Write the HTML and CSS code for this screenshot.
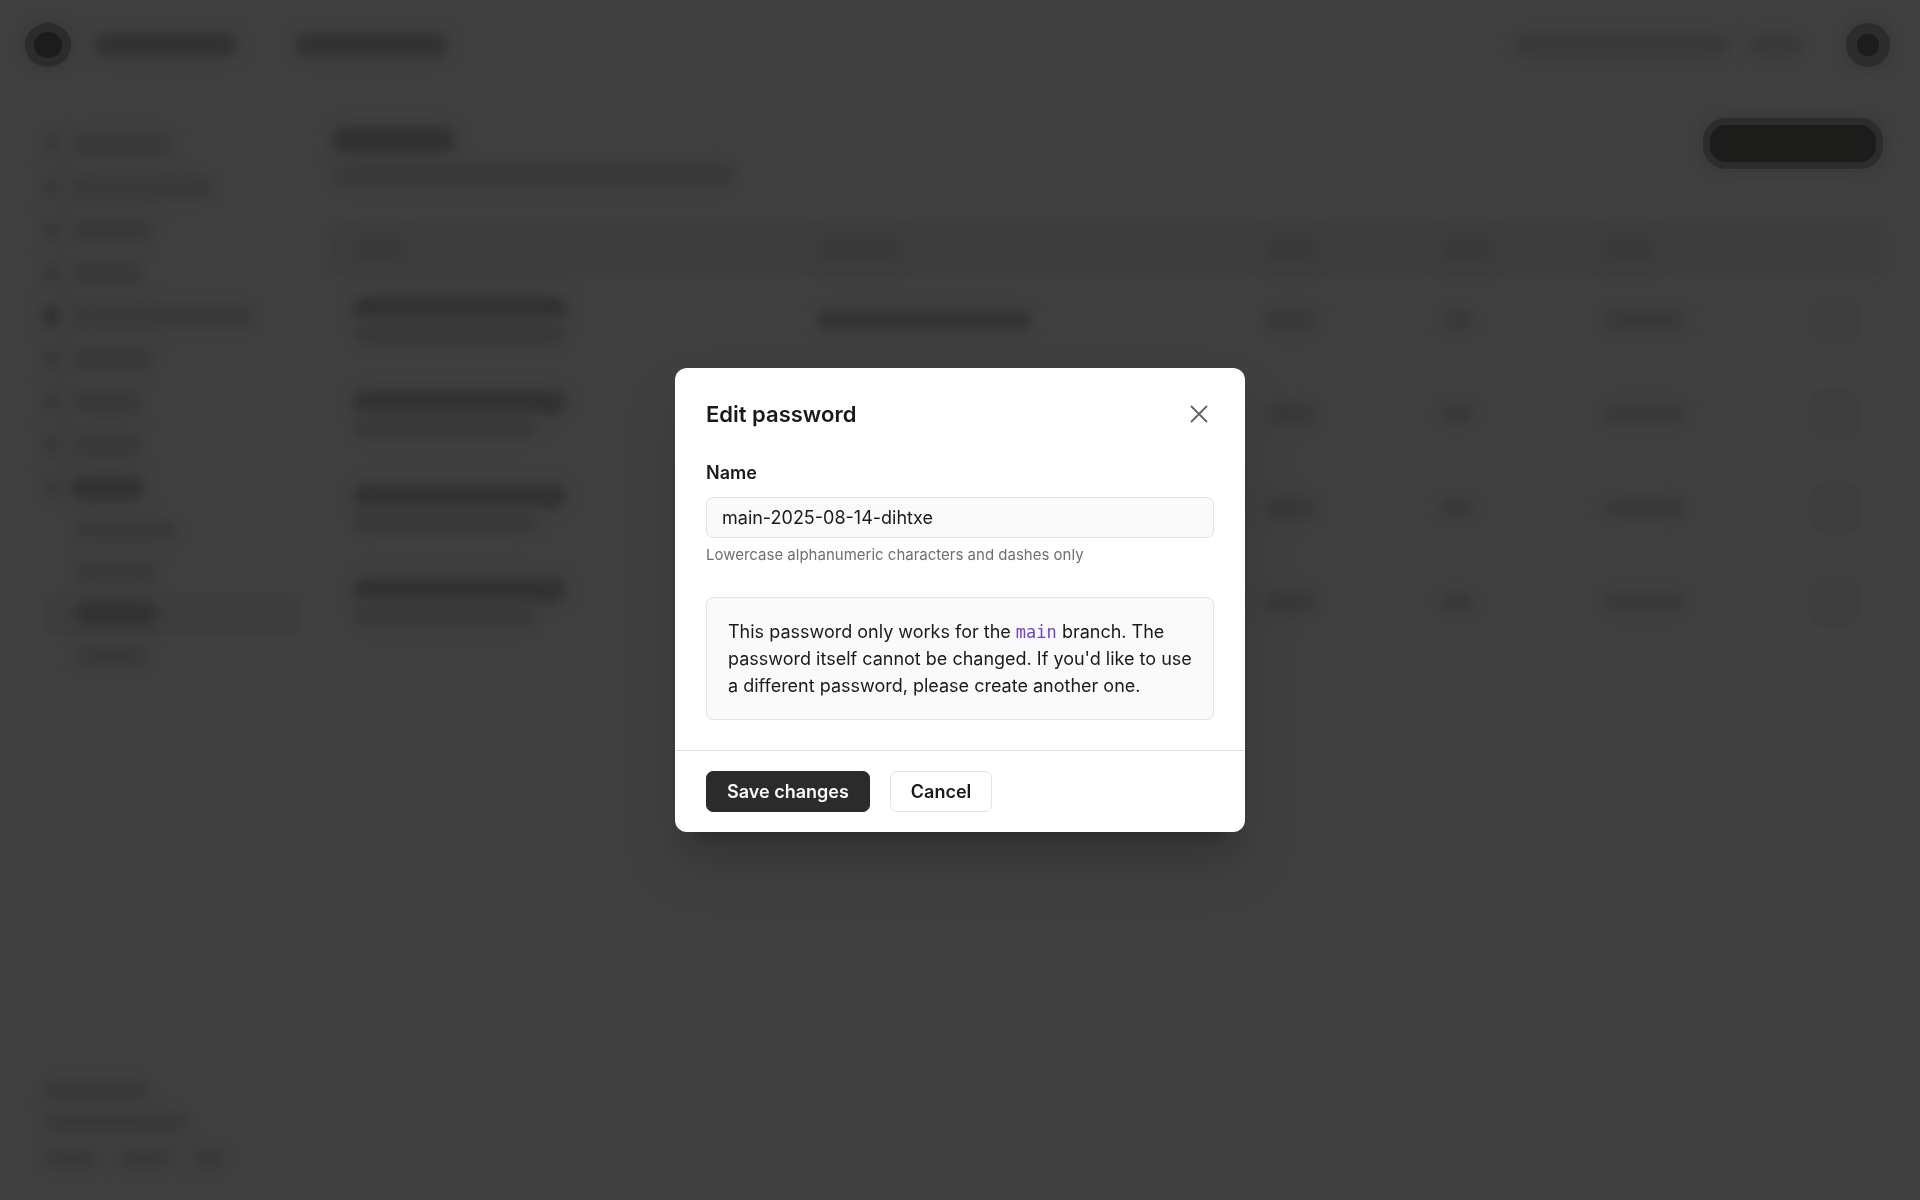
FILE: index.html
```html
<!DOCTYPE html>
<html lang="en">
<head>
<meta charset="utf-8">
<meta name="viewport" content="width=device-width, initial-scale=1">
<title>Edit password</title>
<link rel="stylesheet" href="styles.css">
</head>
<body>
<div class="app" aria-hidden="true">
  <div class="topbar">
    <span class="dot dot-logo"></span>
    <span class="bar strong w140"></span>
    <span class="bar strong w150 crumb"></span>
    <span class="bar w210 push"></span>
    <span class="bar w50"></span>
    <span class="dot dot-user"></span>
  </div>
  <div class="columns">
    <div class="sidebar">
      <div class="item"><span class="bar icon"></span><span class="bar w100"></span></div>
      <div class="item"><span class="bar icon"></span><span class="bar w140"></span></div>
      <div class="item"><span class="bar icon"></span><span class="bar w80"></span></div>
      <div class="item"><span class="bar icon"></span><span class="bar w70"></span></div>
      <div class="item"><span class="bar icon strong"></span><span class="bar w180"></span></div>
      <div class="item"><span class="bar icon"></span><span class="bar w80"></span></div>
      <div class="item"><span class="bar icon"></span><span class="bar w70"></span></div>
      <div class="item"><span class="bar icon"></span><span class="bar w70"></span></div>
      <div class="item"><span class="bar icon"></span><span class="bar strong w70"></span></div>
      <div class="item sub"><span class="bar thin w100"></span></div>
      <div class="item sub"><span class="bar thin w80"></span></div>
      <div class="item sub active"><span class="bar strong w80"></span></div>
      <div class="item sub"><span class="bar thin w70"></span></div>
      <div class="side-foot">
        <div class="foot-row"><span class="bar thin w100"></span></div>
        <div class="foot-row"><span class="bar thin w140"></span></div>
        <div class="foot-row foot-links"><span class="bar thin w50"></span><span class="bar thin w50"></span><span class="bar thin w30"></span></div>
      </div>
    </div>
    <div class="main">
      <div class="head">
        <div class="head-text"><span class="bar strong title w120"></span><span class="bar w400"></span></div>
        <span class="new-button"></span>
      </div>
      <div class="row row-head"><span class="bar w50"></span><span class="bar w80"></span><span class="bar w50"></span><span class="bar w50"></span><span class="bar w50"></span></div>
      <div class="row"><div class="stack"><span class="bar strong w210"></span><span class="bar w210"></span></div><span class="bar strong thin w210"></span><span class="bar w50"></span><span class="bar thin w30"></span><span class="bar thin w80"></span><span class="more"></span></div>
      <div class="row"><div class="stack"><span class="bar strong w210"></span><span class="bar w180"></span></div><span class="bar strong thin w210"></span><span class="bar w50"></span><span class="bar thin w30"></span><span class="bar thin w80"></span><span class="more"></span></div>
      <div class="row"><div class="stack"><span class="bar strong w210"></span><span class="bar w180"></span></div><span class="bar strong thin w210"></span><span class="bar w50"></span><span class="bar thin w30"></span><span class="bar thin w80"></span><span class="more"></span></div>
      <div class="row"><div class="stack"><span class="bar strong w210"></span><span class="bar w180"></span></div><span class="bar strong thin w210"></span><span class="bar w50"></span><span class="bar thin w30"></span><span class="bar thin w80"></span><span class="more"></span></div>
    </div>
  </div>
</div>

<div class="overlay">
  <form class="modal" role="dialog" aria-modal="true" aria-labelledby="modal-title">
    <div class="modal-body">
      <header class="modal-head">
        <h1 id="modal-title">Edit password</h1>
        <button type="button" class="close" aria-label="Close">
          <svg width="18" height="18" viewBox="0 0 18 18" fill="none" stroke="currentColor" stroke-width="1.8" stroke-linecap="round"><path d="M1.500 1.500l15 15M16.500 1.500l-15 15"/></svg>
        </button>
      </header>
      <label class="label" for="name">Name</label>
      <input class="field" id="name" type="text" value="main-2025-08-14-dihtxe" aria-describedby="name-hint">
      <p class="hint" id="name-hint">Lowercase alphanumeric characters and dashes only</p>
      <p class="note">This password only works for the <code>main</code> branch. The password itself cannot be changed. If you'd like to use a different password, please create another one.</p>
    </div>
    <footer class="modal-foot">
      <button type="submit" class="btn primary">Save changes</button>
      <button type="button" class="btn">Cancel</button>
    </footer>
  </form>
</div>
</body>
</html>
```

FILE: styles.css
```css
* { box-sizing: border-box; }

body {
  margin: 0;
  background: #404040;
  color: #1a1a1a;
  font-family: Inter, "Liberation Sans", sans-serif;
  font-size: 18px;
  line-height: 27px;
}

/* Dimmed page behind the dialog */
.app {
  display: flex;
  flex-direction: column;
  min-height: 100vh;
}

.bar {
  display: block;
  flex: none;
  height: 20px;
  border-radius: 10px;
  background: #383838;
  box-shadow: 0 0 10px 4px #3d3d3d;
  filter: blur(6px);
}
.bar.strong {
  height: 22px;
  background: #323232;
  box-shadow: 0 0 12px 4px #3b3b3b;
  filter: blur(5px);
}
.bar.thin { height: 16px; }
.bar.icon { width: 18px; height: 18px; }
.bar.title { height: 26px; }

.w30 { width: 30px; }
.w50 { width: 50px; }
.w70 { width: 70px; }
.w80 { width: 80px; }
.w100 { width: 100px; }
.w120 { width: 120px; }
.w140 { width: 140px; }
.w150 { width: 150px; }
.w180 { width: 180px; }
.w210 { width: 210px; }
.w400 { width: 400px; }

.topbar {
  display: flex;
  align-items: center;
  height: 90px;
  padding: 0 41px 0 34px;
}
.crumb { margin-left: 60px; }
.push { margin-left: auto; margin-right: 24px; }
.dot {
  flex: none;
  border-radius: 50%;
  background: #1c1c1a;
}
.dot-logo {
  width: 28px;
  height: 26px;
  margin-right: 34px;
  box-shadow: 0 0 0 9px #2c2c2c, 0 0 12px 14px #3a3a3a;
}
.dot-user {
  width: 22px;
  height: 22px;
  margin-left: 56px;
  box-shadow: 0 0 0 11px #2c2c2c, 0 0 12px 16px #3a3a3a;
}

.columns { display: flex; flex: 1; }
.sidebar {
  display: flex;
  flex-direction: column;
  flex: none;
  width: 300px;
  padding: 32px 0 20px 42px;
}
.item {
  display: flex;
  align-items: center;
  gap: 12px;
  height: 43px;
}
.item.sub { height: 42px; padding-left: 34px; }
.item.active {
  background: #3d3d3d;
  border-radius: 12px;
  filter: blur(2px);
}
.side-foot { margin-top: auto; }
.foot-row { display: flex; align-items: center; height: 32px; padding-left: 4px; }
.foot-links { gap: 24px; height: 42px; }

.main { flex: 1; min-width: 0; padding: 35px 36px 0 30px; }
.head {
  display: flex;
  justify-content: space-between;
  align-items: flex-start;
  padding: 0 8px 0 4px;
  margin-bottom: 40px;
}
.head-text { display: grid; gap: 12px; padding-top: 2px; }
.new-button {
  width: 166px;
  height: 37px;
  border-radius: 16px;
  background: #1c1c1a;
  box-shadow: 0 0 0 7px #2c2c2c, 0 0 12px 12px #3a3a3a;
}

.row {
  display: grid;
  grid-template-columns: 465fr 447fr 176fr 164fr 203fr 54px;
  align-items: center;
  height: 94px;
  padding: 0 22px 4px 25px;
}
.row-head {
  height: 50px;
  padding-bottom: 0;
  border-radius: 12px;
  background: #3d3d3d;
  box-shadow: 0 0 6px 4px #3e3e3e;
}
.stack { display: grid; gap: 5px; }
.more {
  height: 52px;
  border-radius: 20px;
  background: #3e3e3e;
}

/* Dialog */
.overlay {
  position: fixed;
  inset: 0;
  display: flex;
  align-items: center;
  justify-content: center;
  padding: 24px;
  overflow: auto;
}
.modal {
  width: 100%;
  max-width: 570px;
  margin: auto;
  border-radius: 12px;
  background: #fff;
  box-shadow:
    0 32px 56px 6px rgba(0, 0, 0, .1),
    0 32px 24px -4px rgba(0, 0, 0, .08),
    0 32px 12px -24px rgba(0, 0, 0, .16);
}
.modal-body { padding: 30px 31px; }
.modal-head {
  display: flex;
  align-items: center;
  justify-content: space-between;
  height: 32px;
  margin-bottom: 29px;
}
.modal-head h1 {
  margin: 0;
  font-size: 22px;
  line-height: 32px;
  font-weight: 600;
}
.close {
  display: flex;
  padding: 6px;
  border: 0;
  background: none;
  color: #636363;
  cursor: pointer;
}
.label { display: block; margin-bottom: 11px; font-weight: 600; }
.field {
  display: block;
  width: 100%;
  height: 41px;
  padding: 0 15px;
  border: 1px solid #e3e3e3;
  border-radius: 7px;
  background: #fafafa;
  color: inherit;
  font: inherit;
}
.hint {
  margin: 6px 0 31px;
  color: #6f6f6f;
  font-size: 15px;
  line-height: 22px;
}
.note {
  margin: 0;
  padding: 20px 16px 20px 21px;
  border: 1px solid #e3e3e3;
  border-radius: 7px;
  background: #fafafa;
}
.note code {
  color: #6e3fd6;
  font-family: "DejaVu Sans Mono", monospace;
  font-size: 17px;
  line-height: 20px;
}
.modal-foot {
  display: flex;
  gap: 20px;
  padding: 20px 31px;
  border-top: 1px solid #e0e0e0;
}
.btn {
  height: 41px;
  padding: 0 20px;
  border: 1px solid #e3e3e3;
  border-radius: 7px;
  background: #fff;
  color: #1a1a1a;
  font: inherit;
  font-weight: 600;
  cursor: pointer;
}
.btn.primary { border-color: #2b2b2b; background: #2b2b2b; color: #fafafa; }
```
